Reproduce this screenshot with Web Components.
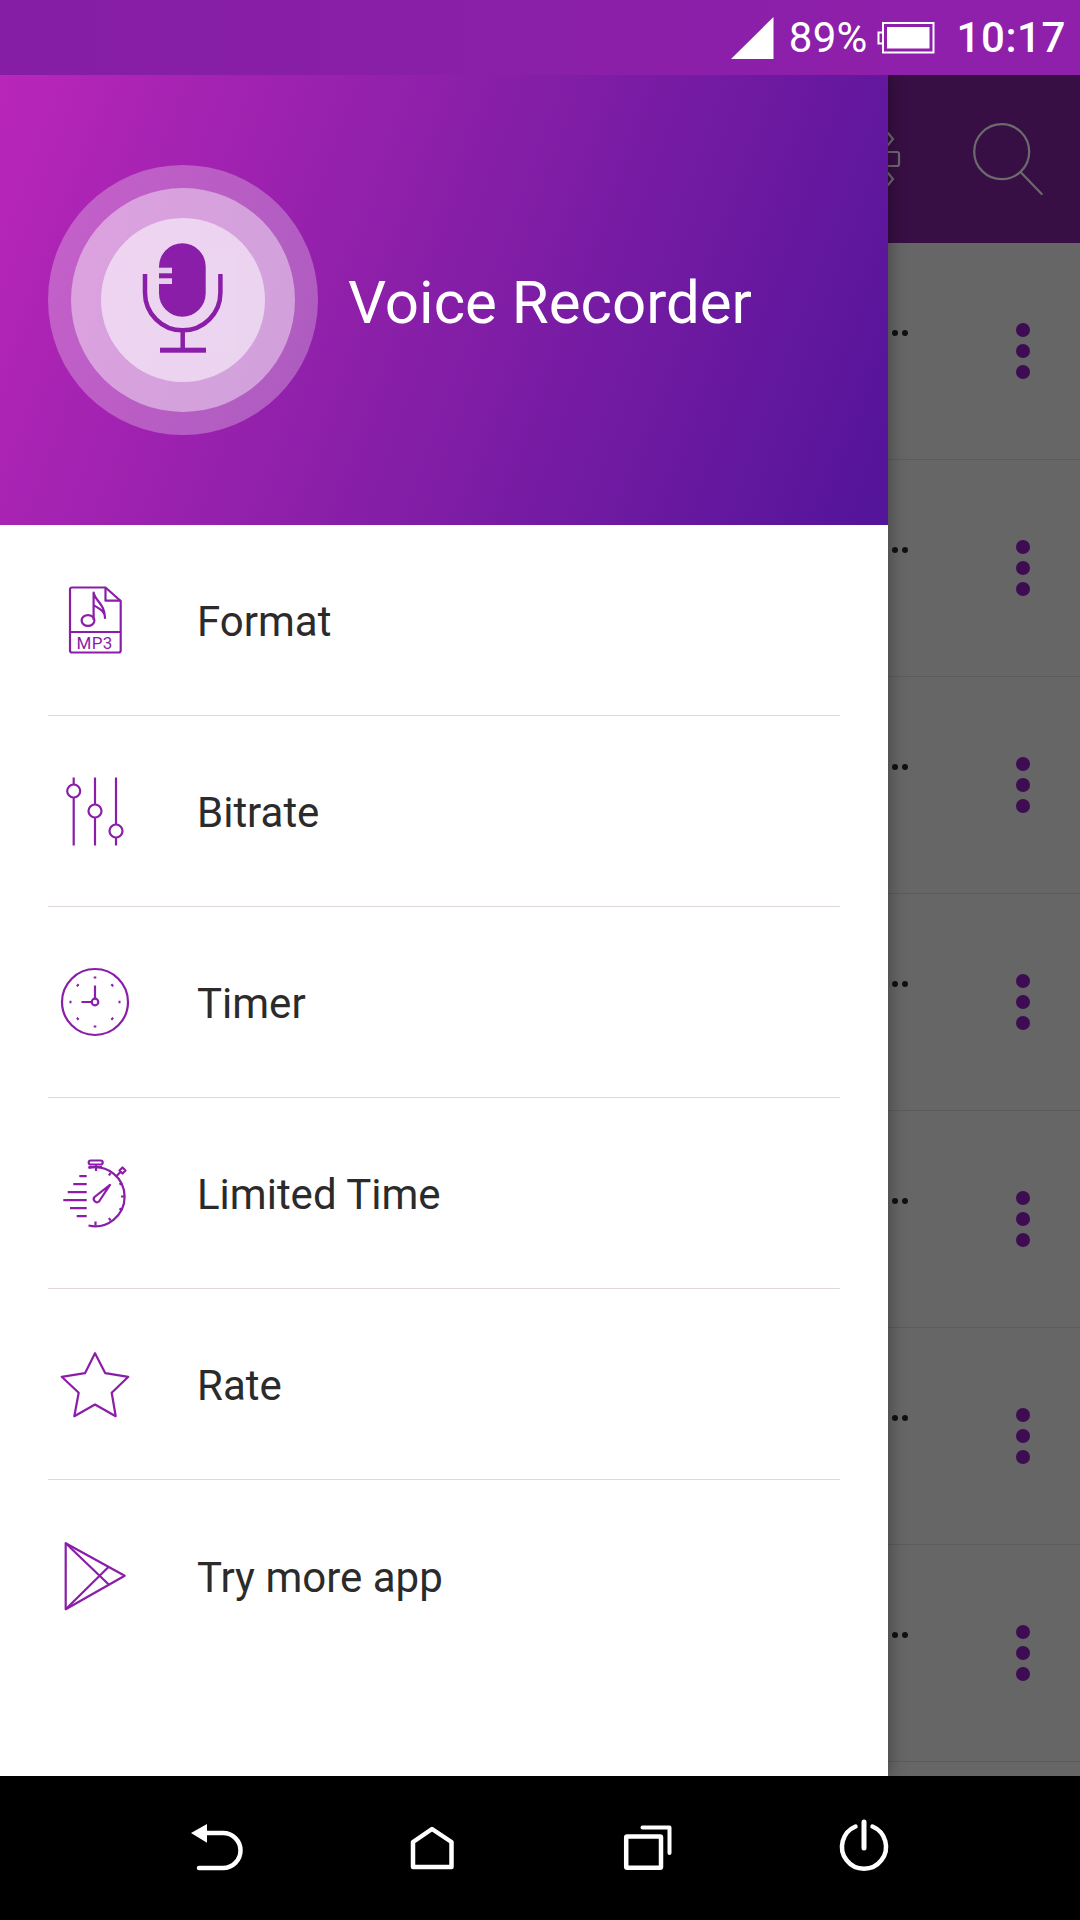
<!DOCTYPE html>
<html lang="en">
<head>
<meta charset="utf-8">
<title>Voice Recorder</title>
<style>
  html, body { margin: 0; padding: 0; background: #000; }
  body { font-family: Roboto, "Liberation Sans", sans-serif; }
</style>
</head>
<body>

<recorder-app>
  <status-bar slot="status"></status-bar>

  <track-list slot="behind">
    <track-row></track-row><track-row></track-row><track-row></track-row><track-row></track-row>
    <track-row></track-row><track-row></track-row><track-row></track-row><track-row></track-row>
  </track-list>

  <nav-drawer slot="drawer" title-text="Voice Recorder">
    <drawer-item label="Format">
      <svg slot="icon" viewBox="0 0 80 80" width="80" height="80">
        <path d="M17 7.500H50.500L65.700 21V70.500a2 2 0 0 1-2 2H17a2 2 0 0 1-2-2V9.500a2 2 0 0 1 2-2Z"/>
        <path d="M50.500 7.500V20.700H65.700M15 52H65.700"/>
        <ellipse cx="33" cy="40.500" rx="6.400" ry="5.400"/>
        <path d="M38.600 40V12.500C40 21 50 24 50 38C50 30 43 28.500 38.600 25"/>
        <text x="39.600" y="69" text-anchor="middle" font-size="17" font-family="Roboto, sans-serif" fill="currentColor" stroke="none" letter-spacing=".4">MP3</text>
      </svg>
    </drawer-item>
    <drawer-item label="Bitrate">
      <svg slot="icon" viewBox="0 0 80 80" width="80" height="80">
        <path d="M18.700 6.500V74.500M40 6.500V74.500M61 6.500V74.500"/>
        <circle cx="18.700" cy="20" r="6.500" fill="#fff"/>
        <circle cx="40" cy="40" r="6.500" fill="#fff"/>
        <circle cx="61" cy="60" r="6.500" fill="#fff"/>
      </svg>
    </drawer-item>
    <drawer-item label="Timer">
      <svg slot="icon" viewBox="0 0 80 80" width="80" height="80">
        <circle cx="40" cy="40" r="33"/>
        <path d="M40 36V23.500M36.500 40H26.500"/>
        <circle cx="40" cy="40" r="3.300"/>
        <path stroke-width="2.600" d="M40 14.500V16.500M40 63.500V65.500M14.500 40H16.500M63.500 40H65.500M22 22.500L23.500 24M56.500 24L58 22.500M22 57.500L23.500 56M56.500 56L58 57.500"/>
      </svg>
    </drawer-item>
    <drawer-item label="Limited Time">
      <svg slot="icon" viewBox="0 0 80 80" width="80" height="80">
        <path d="M33.500 15A29.500 29.500 0 1 1 33.500 72.500"/>
        <rect x="33.700" y="7.500" width="14" height="4" rx="2"/>
        <path d="M33.500 14H47M41 11.500V18"/>
        <path d="M61 23.500L65 19.500M64.500 17.500L67.500 14.500L70.500 17.500L67.500 20.500Z"/>
        <path d="M31.700 23.200H24.300M31.700 31.200H18.300M31.700 39.200H12.700M31.700 47.200H8.300M31.700 55.200H15M31.700 63.200H21.700"/>
        <path d="M55 31.800L39.500 44A3.200 3.200 0 0 0 44 48.500Z"/>
        <path d="M40.500 68.500V72.500M54 65L55.500 67.500M64.500 55.500L67 57M66 43.500H70M64.500 31.500L67 30M54 22.500L55.500 20"/>
      </svg>
    </drawer-item>
    <drawer-item label="Rate">
      <svg slot="icon" viewBox="0 0 80 80" width="80" height="80">
        <path d="M40 9.200L50.300 29.200L73.300 32.800L56.700 48.800L60.700 72.200L40 60.500L19.300 72.200L23.700 48.800L6.700 32.800L30 29.200Z"/>
      </svg>
    </drawer-item>
    <drawer-item label="Try more app">
      <svg slot="icon" viewBox="0 0 80 80" width="80" height="80">
        <path d="M10.700 7.200L69.700 39.800L10.700 73.200Z"/>
        <path d="M10.700 7.200L54 48.800M10.700 73.200L54 30.500"/>
      </svg>
    </drawer-item>
  </nav-drawer>

  <soft-keys slot="keys"></soft-keys>
</recorder-app>

<script>
class RecorderApp extends HTMLElement {
  constructor() {
    super();
    this.attachShadow({ mode: 'open' });
    this.shadowRoot.innerHTML = `
      <style>
        :host { display: flex; flex-direction: column; width: 1080px; height: 1920px; overflow: hidden; }
        .main { position: relative; flex: 1; min-height: 0; overflow: hidden; }
      </style>
      <slot name="status"></slot>
      <div class="main">
        <slot name="behind"></slot>
        <slot name="drawer"></slot>
      </div>
      <slot name="keys"></slot>
    `;
  }
}

class StatusBar extends HTMLElement {
  constructor() {
    super();
    this.attachShadow({ mode: 'open' });
    this.shadowRoot.innerHTML = `
      <style>
        :host {
          display: flex;
          align-items: center;
          justify-content: flex-end;
          height: 75px;
          padding-right: 14px;
          background: linear-gradient(90deg, #861ea5, #8f20ab);
          color: #fff;
          font-family: Roboto, sans-serif;
          font-size: 42px;
          line-height: 75px;
        }
        svg { display: block; flex: none; }
        .pct { margin-left: 15px; letter-spacing: .2px; }
        .batt { margin-left: 10px; }
        .time { margin-left: 21px; font-weight: 500; letter-spacing: .6px; }
      </style>
      <svg width="43" height="42" viewBox="0 0 43 42"><path d="M42.500 0V42H0Z" fill="#fff"/></svg>
      <span class="pct">89%</span>
      <svg class="batt" width="58" height="32" viewBox="0 0 58 32">
        <rect x="6" y="1" width="50.500" height="29.500" fill="none" stroke="#fff" stroke-width="2"/>
        <path d="M6 10.500H1.500V21.500H6" fill="none" stroke="#fff" stroke-width="2"/>
        <rect x="10" y="5" width="42.500" height="21.500" fill="#fff"/>
      </svg>
      <span class="time">10:17</span>
    `;
  }
}

class TrackList extends HTMLElement {
  constructor() {
    super();
    this.attachShadow({ mode: 'open' });
    this.shadowRoot.innerHTML = `
      <style>
        :host { display: block; height: 100%; background: #666; }
        .bar {
          display: flex;
          justify-content: flex-end;
          height: 168px;
          background: #370f44;
        }
        svg { display: block; fill: none; stroke: #6b6b6b; stroke-width: 2.200; stroke-linecap: round; }
      </style>
      <div class="bar">
        <svg width="192" height="168" viewBox="0 0 192 168">
          <path d="M0 58L5 64L0 70M0 98L5 104L0 110"/>
          <path d="M0 77H9a2 2 0 0 1 2 2V89a2 2 0 0 1-2 2H0"/>
          <circle cx="113.700" cy="76.700" r="27.500"/>
          <path d="M132.500 97L153.700 119"/>
        </svg>
      </div>
      <slot></slot>
    `;
  }
}

class TrackRow extends HTMLElement {
  constructor() {
    super();
    this.attachShadow({ mode: 'open' });
    this.shadowRoot.innerHTML = `
      <style>
        :host {
          display: flex;
          align-items: center;
          justify-content: space-between;
          box-sizing: border-box;
          height: 217px;
          padding: 0 50px 0 892px;
          border-bottom: 1.500px solid #5b5b5b;
        }
        .more { display: flex; gap: 4px; margin-bottom: 36px; }
        .more i { width: 6px; height: 6px; border-radius: 50%; background: #111; }
        .menu { display: flex; flex-direction: column; gap: 7px; }
        .menu i { width: 14px; height: 14px; border-radius: 50%; background: #3d0c52; }
      </style>
      <div class="more"><i></i><i></i></div>
      <div class="menu"><i></i><i></i><i></i></div>
    `;
  }
}

class NavDrawer extends HTMLElement {
  constructor() {
    super();
    this.attachShadow({ mode: 'open' });
    const title = this.getAttribute('title-text') || '';
    this.shadowRoot.innerHTML = `
      <style>
        :host {
          position: absolute;
          top: 0;
          left: 0;
          bottom: 0;
          width: 888px;
          display: flex;
          flex-direction: column;
          background: #fff;
          box-shadow: 3px 0 14px rgba(0,0,0,.28);
        }
        .head {
          display: flex;
          align-items: center;
          gap: 30px;
          box-sizing: border-box;
          height: 450px;
          padding-left: 48px;
          background: linear-gradient(110deg, #b926b9 0%, #8a1fa8 46%, #52149a 100%);
        }
        .head svg { display: block; flex: none; }
        h1 {
          margin: 5px 0 0;
          color: #fff;
          font-family: Roboto, sans-serif;
          font-size: 60px;
          font-weight: 400;
        }
        .items { display: flex; flex-direction: column; }
      </style>
      <div class="head">
        <svg width="270" height="270" viewBox="0 0 270 270">
          <circle cx="135" cy="135" r="135" fill="#fff" fill-opacity=".27"/>
          <circle cx="135" cy="135" r="112" fill="#fff" fill-opacity=".42"/>
          <circle cx="135" cy="135" r="82" fill="#fff" fill-opacity=".55"/>
          <rect x="92" y="90" width="97" height="96" fill="#fff" fill-opacity=".03"/>
          <rect x="111" y="78.300" width="46.700" height="73.400" rx="23.350" fill="#8a1ea8"/>
          <rect x="111" y="102.700" width="13" height="5.600" fill="#e6cfec"/>
          <rect x="111" y="113.300" width="13" height="5.700" fill="#e6cfec"/>
          <path d="M97 109V127.700A37.700 37.700 0 0 0 172.400 127.700V109" fill="none" stroke="#8a1ea8" stroke-width="4.500"/>
          <path d="M134.700 166V184" fill="none" stroke="#8a1ea8" stroke-width="4.500"/>
          <rect x="112" y="182.700" width="46" height="5" fill="#8a1ea8"/>
        </svg>
        <h1>${title}</h1>
      </div>
      <div class="items"><slot></slot></div>
    `;
  }
}

class DrawerItem extends HTMLElement {
  constructor() {
    super();
    this.attachShadow({ mode: 'open' });
    this.shadowRoot.innerHTML = `
      <style>
        :host {
          display: flex;
          align-items: center;
          box-sizing: border-box;
          height: 191px;
          margin: 0 48px;
          border-bottom: 1px solid #e2d6de;
          color: #2b2b2b;
          font-family: Roboto, sans-serif;
          font-size: 42px;
        }
        :host(:last-child) { border-bottom: none; }
        ::slotted(svg) {
          display: block;
          flex: none;
          margin-left: 7px;
          fill: none;
          stroke: #8a1ea8;
          color: #8a1ea8;
          stroke-width: 2.200;
          stroke-linejoin: round;
        }
        .label { margin-left: 62px; padding-top: 3px; }
      </style>
      <slot name="icon"></slot>
      <span class="label">${this.getAttribute('label') || ''}</span>
    `;
  }
}

class SoftKeys extends HTMLElement {
  constructor() {
    super();
    this.attachShadow({ mode: 'open' });
    this.shadowRoot.innerHTML = `
      <style>
        :host { display: block; height: 144px; background: #000; }
        svg { display: block; fill: none; stroke: #fff; stroke-width: 4.500; stroke-linecap: round; stroke-linejoin: round; }
      </style>
      <svg width="1080" height="144" viewBox="0 1776 1080 144">
        <path d="M191 1833L207 1824V1842.700Z" fill="#fff" stroke="none"/>
        <path d="M205 1833H223A17.500 17.500 0 0 1 223 1868H199"/>
        <path d="M432 1829L451.500 1842V1867H413V1842Z"/>
        <rect x="626.200" y="1836.500" width="34.800" height="31.300" rx="1"/>
        <path d="M642.500 1827.500H669.500V1853" stroke-width="4"/>
        <path d="M855.500 1826.500A22 22 0 1 0 872.500 1826.500"/>
        <path d="M864 1822V1848" stroke-width="5"/>
      </svg>
    `;
  }
}

customElements.define('recorder-app', RecorderApp);
customElements.define('status-bar', StatusBar);
customElements.define('track-list', TrackList);
customElements.define('track-row', TrackRow);
customElements.define('nav-drawer', NavDrawer);
customElements.define('drawer-item', DrawerItem);
customElements.define('soft-keys', SoftKeys);
</script>
</body>
</html>
